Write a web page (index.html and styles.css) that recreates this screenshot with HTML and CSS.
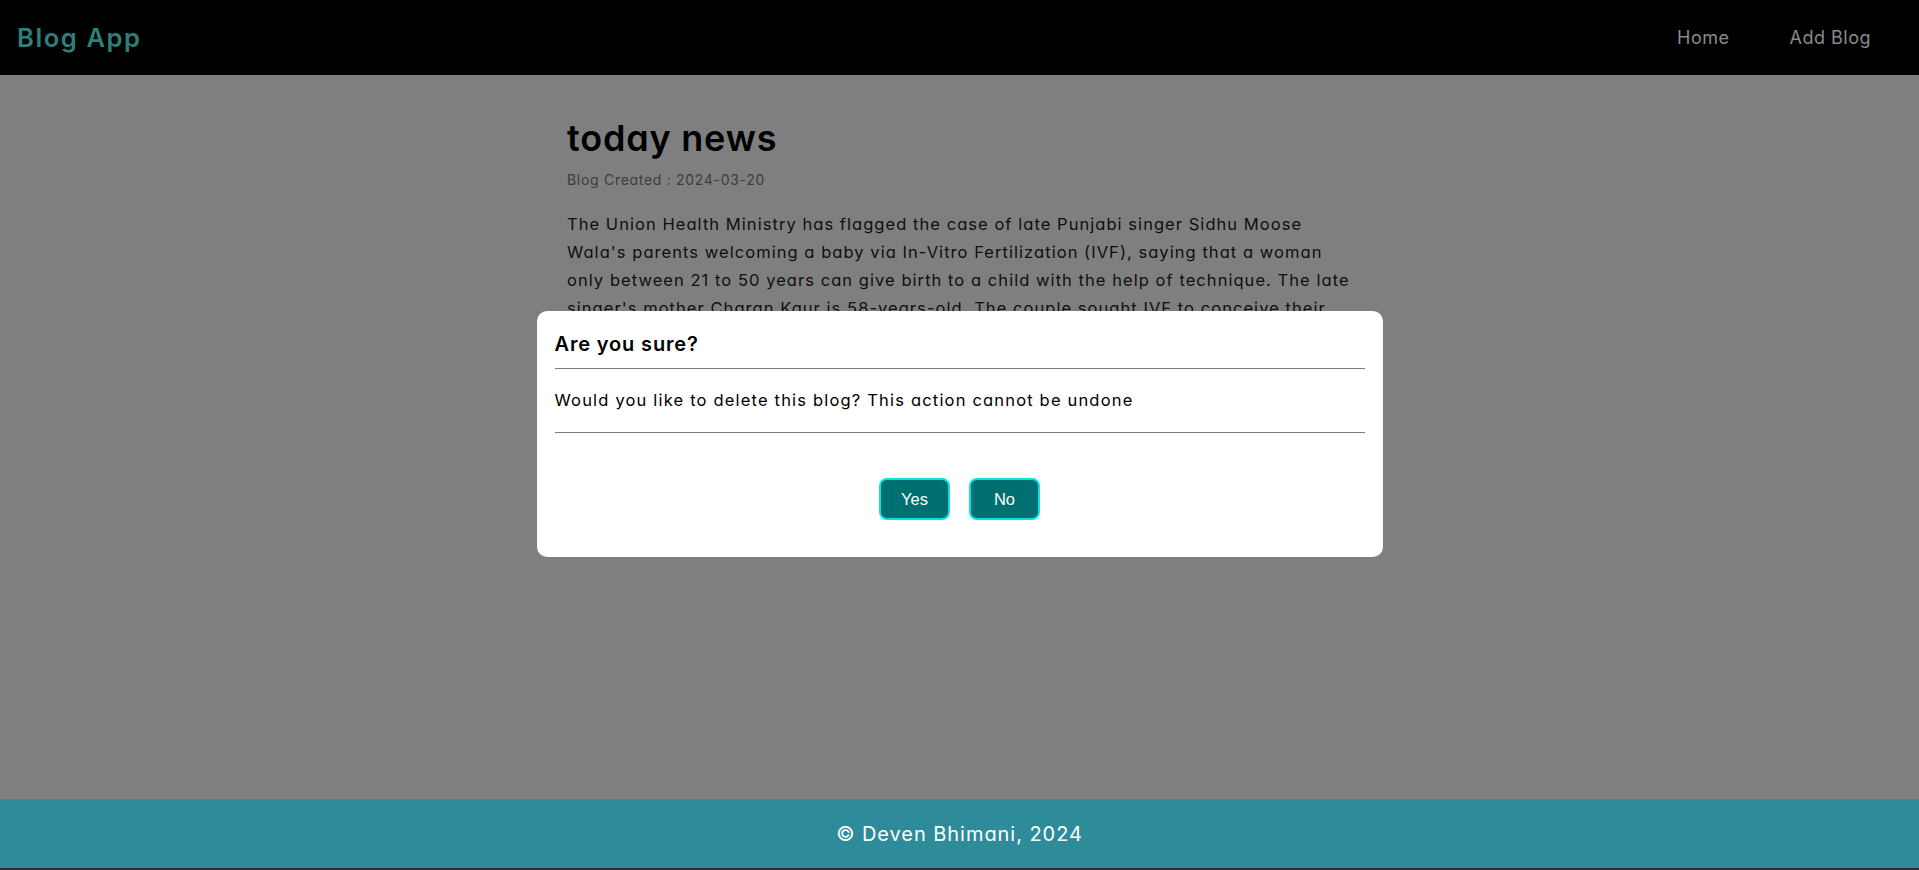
FILE: index.html
```html
<!DOCTYPE html>
<html lang="en">
<head>
<meta charset="utf-8">
<title>Blog App</title>
<link rel="stylesheet" href="styles.css">
</head>
<body>
<div class="page">
  <header class="topbar">
    <div class="logo">Blog App</div>
    <nav class="nav">
      <a class="nav-link" href="#">Home</a>
      <a class="nav-link" href="#">Add Blog</a>
    </nav>
  </header>
  <main class="main">
    <article class="post">
      <h1 class="post-title">today news</h1>
      <div class="post-meta">Blog Created : 2024-03-20</div>
      <p class="post-body">The Union Health Ministry has flagged the case of late Punjabi singer Sidhu Moose<br>Wala's parents welcoming a baby via In-Vitro Fertilization (IVF), saying that a woman<br>only between 21 to 50 years can give birth to a child with the help of technique. The late<br>singer's mother Charan Kaur is 58-years-old. The couple sought IVF to conceive their<br>second child after their only son was shot dead in May 2022.</p>
    </article>
    <div class="overlay">
      <div class="modal">
        <div class="modal-title">Are you sure?</div>
        <hr class="modal-rule">
        <div class="modal-text">Would you like to delete this blog? This action cannot be undone</div>
        <hr class="modal-rule second">
        <div class="modal-actions">
          <button class="btn">Yes</button>
          <button class="btn">No</button>
        </div>
      </div>
    </div>
  </main>
  <footer class="footer">© Deven Bhimani, 2024</footer>
</div>
</body>
</html>
```
FILE: styles.css
```css
* { box-sizing: border-box; }
html, body { margin: 0; padding: 0; }
body {
  font-family: Inter, "Noto Sans", sans-serif;
  font-feature-settings: "cv11";
  background: #fff;
}
.page {
  display: flex;
  flex-direction: column;
  height: 100vh;
  overflow: hidden;
}
.topbar {
  height: 75px;
  flex: none;
  background: #000;
  display: flex;
  align-items: center;
  justify-content: space-between;
  padding: 0 48px 0 17px;
}
.logo {
  color: #2f7f79;
  font-size: 25.5px;
  font-weight: 600;
  letter-spacing: 1.6px;
}
.nav { display: flex; gap: 60px; }
.nav-link {
  color: #8a8a8a;
  text-decoration: none;
  font-size: 18px;
  letter-spacing: 0.5px;
}
.main {
  flex: 1;
  position: relative;
  background: #fff;
}
.post {
  width: 785px;
  margin: 0 auto;
  padding-top: 41px;
}
.post-title {
  margin: 0;
  font-size: 36px;
  line-height: 44px;
  font-weight: 600;
  color: #000;
  letter-spacing: 0.8px;
}
.post-meta {
  margin-top: 10px;
  font-size: 14px;
  line-height: 20px;
  color: #7a7a7a;
  letter-spacing: 0.7px;
}
.post-body {
  margin: 20px 0 0;
  font-size: 16.5px;
  line-height: 28px;
  color: #222;
  letter-spacing: 1.05px;
  white-space: nowrap;
}
.overlay {
  position: absolute;
  inset: 0;
  background: rgba(0, 0, 0, 0.5);
}
.modal {
  position: fixed;
  left: 50%;
  top: 311px;
  transform: translateX(-50%);
  width: 846px;
  height: 246px;
  background: #fff;
  border-radius: 10px;
  padding: 18px 18px 0;
}
.modal-title {
  font-size: 20px;
  line-height: 30px;
  font-weight: 600;
  color: #000;
  letter-spacing: 0.85px;
}
.modal-rule {
  margin: 9px 0 0;
  border: 0;
  border-top: 1px solid #7a7a7a;
  height: 0;
}
.modal-text {
  margin-top: 19px;
  font-size: 16.5px;
  line-height: 24px;
  color: #000;
  letter-spacing: 1.18px;
}
.modal-rule.second { margin-top: 20px; }
.modal-actions {
  margin-top: 45px;
  display: flex;
  justify-content: center;
  gap: 19px;
}
.btn {
  width: 71px;
  height: 42px;
  font-family: "Liberation Sans", Arial, sans-serif;
  font-size: 16.5px;
  color: #fff;
  background: #006f71;
  border: 2px solid #0de0e0;
  border-radius: 8px;
  padding: 0;
}
.footer {
  height: 71px;
  flex: none;
  background: #2e8c9a;
  border-bottom: 2px solid #2b2b2b;
  color: #fff;
  font-size: 20px;
  letter-spacing: 0.95px;
  display: flex;
  align-items: center;
  justify-content: center;
}
```
